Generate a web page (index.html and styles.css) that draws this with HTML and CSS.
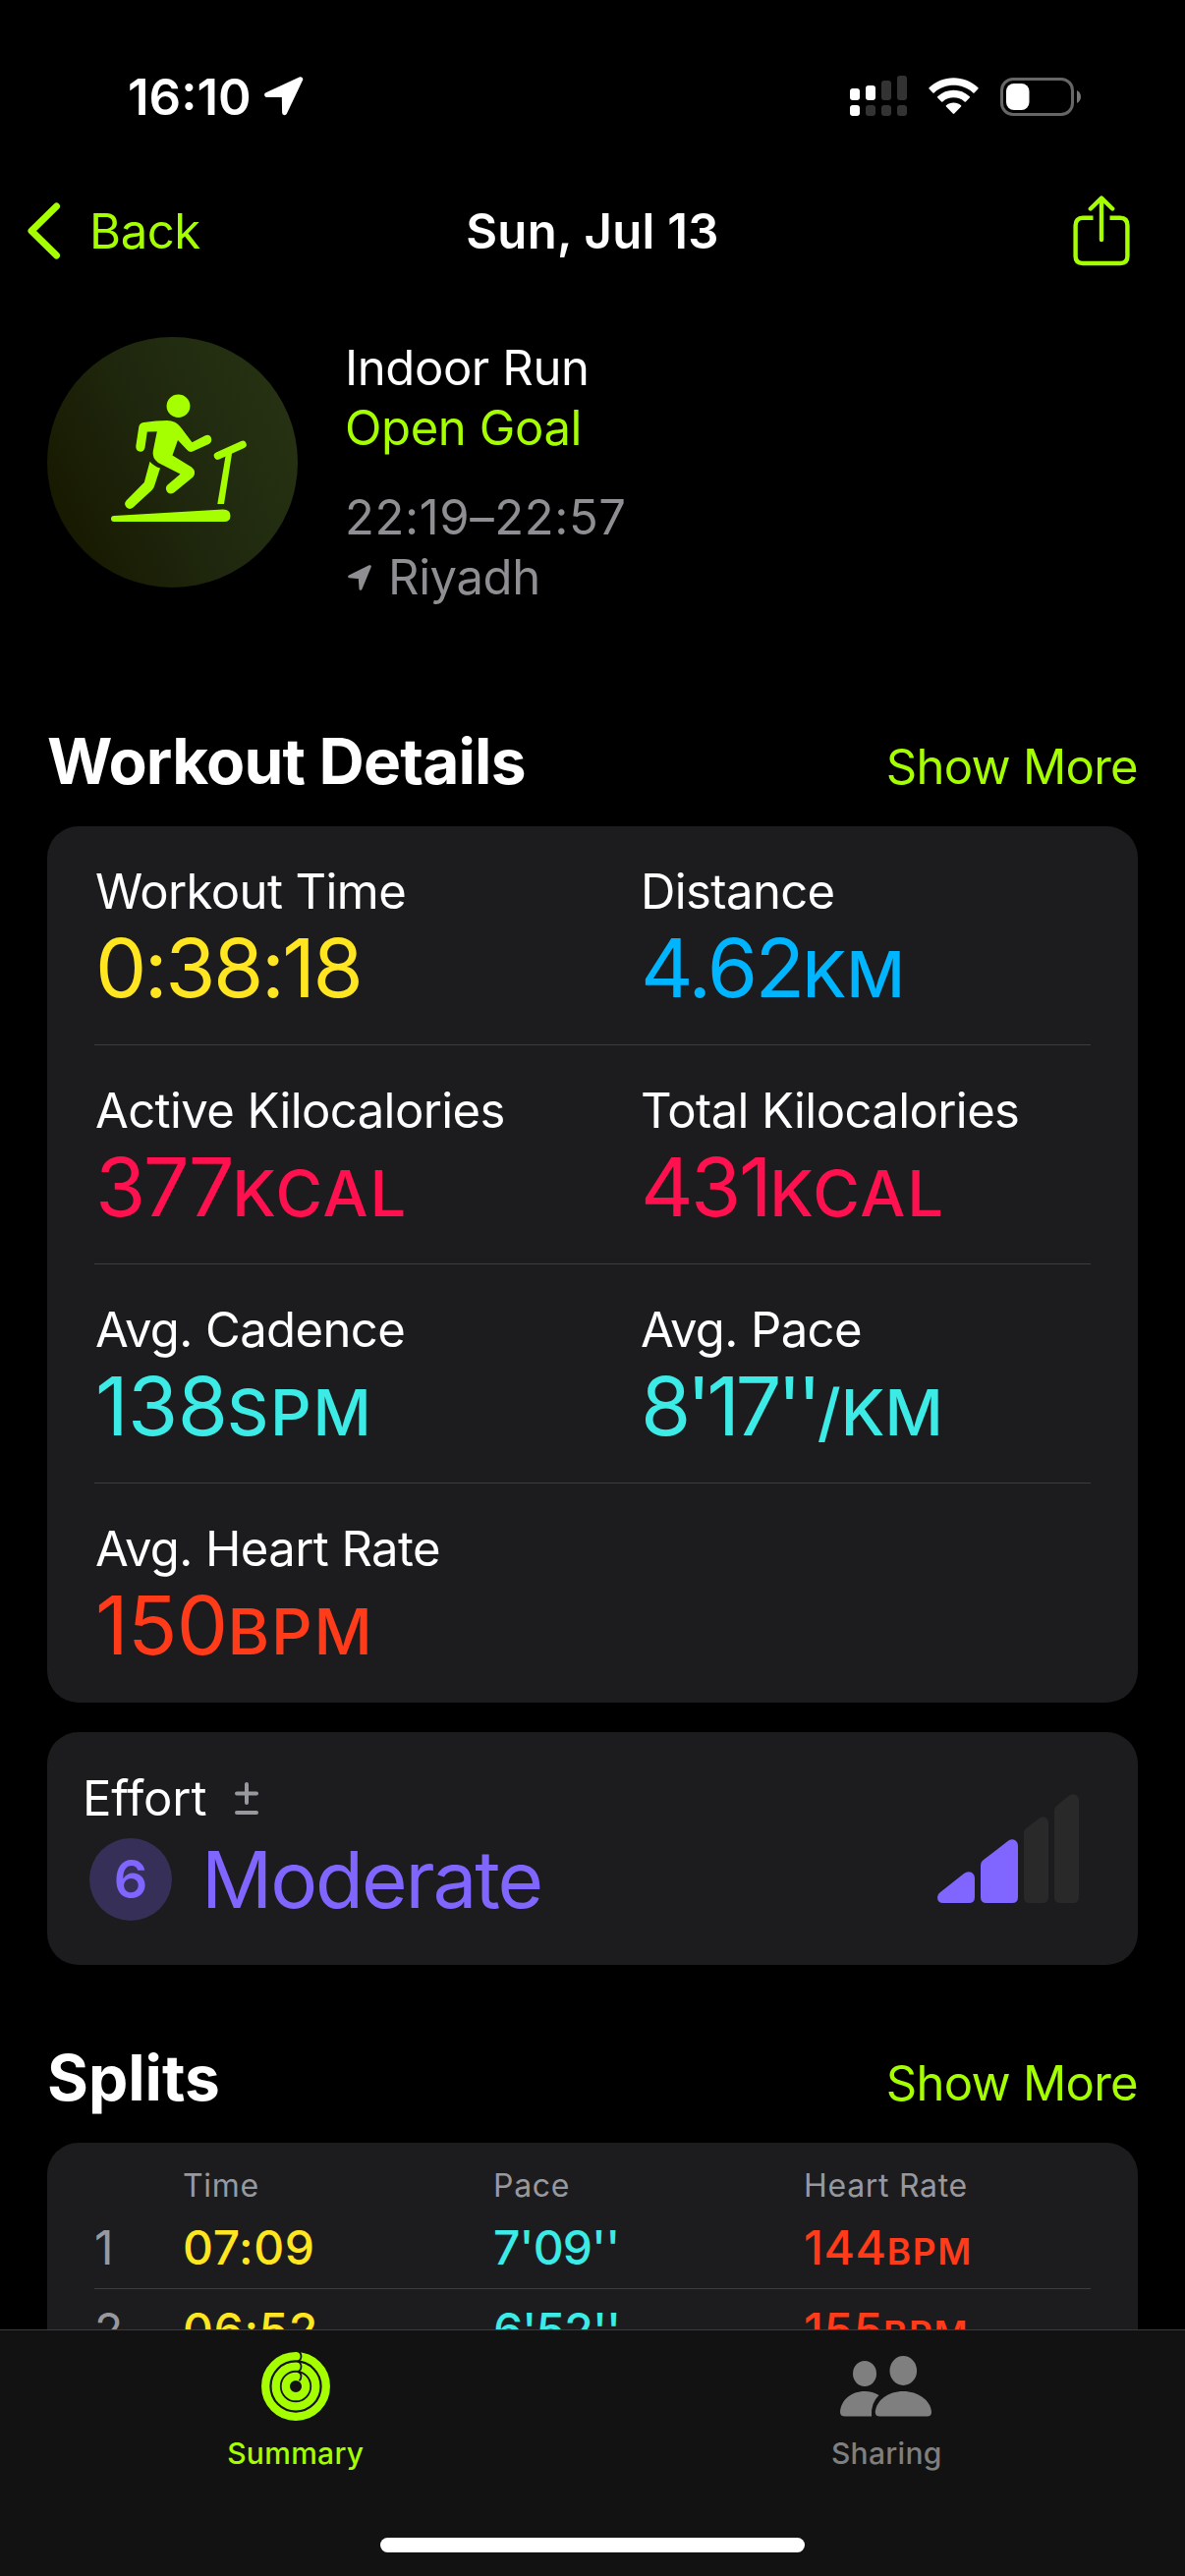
FILE: index.html
```html
<!DOCTYPE html>
<html lang="en">
<head>
    <meta charset="UTF-8">
    <meta name="viewport" content="width=device-width, initial-scale=1.0">
    <title>Workout Summary</title>
    <link rel="stylesheet" href="styles.css">
</head>
<body>

    <div class="screen">
        <!-- Status Bar -->
        <div class="status-bar">
            <div class="status-left">
                <span class="clock">16:10</span>
                <svg class="location" width="40" height="40" viewBox="0 0 40 40">
                    <path d="M36.7 2.7L2.7 18.6H20.3L20.6 36.8Z" fill="#fff" stroke="#fff" stroke-width="5" stroke-linejoin="round"/>
                </svg>
            </div>
            <div class="status-right">
                <svg class="signal" width="58" height="42" viewBox="0 0 58 42">
                    <g fill="#fff">
                        <rect x="0" y="13" width="10" height="12" rx="3"/>
                        <rect x="16" y="10" width="10" height="15" rx="3"/>
                        <rect x="0" y="30" width="10" height="11" rx="3"/>
                    </g>
                    <g fill="#333">
                        <rect x="32" y="5" width="10" height="20" rx="3"/>
                        <rect x="48" y="0" width="10" height="25" rx="3"/>
                        <rect x="16" y="30" width="10" height="11" rx="3"/>
                        <rect x="32" y="30" width="10" height="11" rx="3"/>
                        <rect x="48" y="30" width="10" height="11" rx="3"/>
                    </g>
                </svg>
                <svg class="wifi" width="51" height="38" viewBox="0 0 51 38">
                    <path d="M0.5 10.3C14 -3.2 37 -3.2 50.5 10.3Q51 10.9 50.4 11.5L46.6 15.4Q46 16 45.3 15.4C34 5.2 17 5.2 5.7 15.4Q5 16 4.4 15.4L0.6 11.5Q0 10.9 0.5 10.3Z" fill="#fff"/>
                    <path d="M9.2 19.3C18.3 10.7 32.7 10.7 41.8 19.3Q42.4 19.9 41.8 20.5L37.9 24.4Q37.3 25 36.6 24.4C30.5 19 20.5 19 14.4 24.4Q13.7 25 13.1 24.4L9.2 20.5Q8.6 19.9 9.2 19.3Z" fill="#fff"/>
                    <path d="M18 28.2C22.2 24.6 28.8 24.6 33 28.2Q33.7 28.8 33.1 29.5L26.3 36.6Q25.5 37.4 24.7 36.6L17.9 29.5Q17.3 28.8 18 28.2Z" fill="#fff"/>
                </svg>
                <svg class="battery" width="83" height="39" viewBox="0 0 83 39">
                    <rect x="1.5" y="1.5" width="72" height="36" rx="11.5" fill="none" stroke="#666" stroke-width="3"/>
                    <rect x="6" y="6" width="23.5" height="27" rx="8" fill="#fff"/>
                    <path d="M78 13C83.3 15.5 83.3 23.5 78 26Z" fill="#777"/>
                </svg>
            </div>
        </div>

        <!-- Navigation Bar -->
        <div class="nav-bar">
            <a class="back">
                <svg width="34" height="58" viewBox="0 0 34 58">
                    <path d="M29.5 4L4 29L29.5 54" fill="none" stroke="#a6ff00" stroke-width="7" stroke-linecap="round" stroke-linejoin="round"/>
                </svg>
                <span>Back</span>
            </a>
            <h1 class="nav-title">Sun, Jul 13</h1>
            <svg class="share" width="58" height="72" viewBox="0 0 58 72">
                <g fill="none" stroke="#a6ff00" stroke-width="4.4" stroke-linecap="round" stroke-linejoin="round">
                    <path d="M20.5 22.7H10Q2.6 22.7 2.6 30.5V62Q2.6 69 10 69H48Q55.4 69 55.4 62V30.5Q55.4 22.7 48 22.7H37.5" stroke-linecap="butt"/>
                    <path d="M29 45V3M17.8 13.5L29 2.6L40.2 13.5"/>
                </g>
            </svg>
        </div>

        <div class="content">
            <!-- Workout Header -->
            <div class="workout-header">
                <div class="workout-icon">
                    <svg width="255" height="255" viewBox="0 0 255 255" fill="#a6ff00">
                        <ellipse cx="133.5" cy="70.3" rx="11.9" ry="11.7"/>
                        <path d="M98 87Q111 85 122 84.9Q131 85 136 92L147.5 107.2L161 100.2Q165.5 98.7 167 103Q168 107 164.5 109L148 116.5Q144.5 118 142 114.5L133 105L127.5 120.5L147 132.5Q152.5 137 148.5 142.5L129 158.5Q124.5 161 122 157.5Q119.5 153.5 122.5 150.5L135.5 139.5L113 128Q106.5 123 107.8 116L111.8 96.2L101.8 96.5L99.5 112.5Q98.5 117 94.5 116.7Q90 116 90.3 111L93.3 91.5Q94 87.5 98 87Z"/>
                        <path d="M104.5 126.7Q108.5 131.5 115 133.5L109.2 151.5Q108.5 154 106.5 156L87.5 173.5Q84 176.3 80.8 173.5Q77.5 170 80.5 166.5L98.8 148Z"/>
                        <path d="M173.5 121L199 109.5" stroke="#a6ff00" stroke-width="7.5" stroke-linecap="round"/>
                        <path d="M181.7 120L188.3 117L180 170H173.3Z"/>
                        <path d="M68 182L179 175.5Q186.5 175.5 186.5 182Q186.5 188 180 188H68Q65 188 65 185Q65 182.2 68 182Z"/>
                    </svg>
                </div>
                <div class="workout-info">
                    <div class="workout-type">Indoor Run</div>
                    <div class="workout-goal">Open Goal</div>
                    <div class="workout-hours">22:19–22:57</div>
                    <div class="workout-place">
                        <svg width="24" height="26" viewBox="0 0 24 26">
                            <path d="M22.3 1.7L1.7 11.8L12.2 12.7L13 24.3Z" fill="#8e8e93" stroke="#8e8e93" stroke-width="3" stroke-linejoin="round"/>
                        </svg>
                        <span>Riyadh</span>
                    </div>
                </div>
            </div>

            <!-- Workout Details Section -->
            <div class="section-title details-title">
                <h2>Workout Details</h2>
                <a>Show More</a>
            </div>
            <div class="card details">
                <div class="details-row">
                    <div class="metric">
                        <div class="label">Workout Time</div>
                        <div class="value yellow">0:38:18</div>
                    </div>
                    <div class="metric">
                        <div class="label">Distance</div>
                        <div class="value blue">4.62<span class="unit">KM</span></div>
                    </div>
                </div>
                <div class="details-row">
                    <div class="metric">
                        <div class="label">Active Kilocalories</div>
                        <div class="value pink">377<span class="unit wide">KCAL</span></div>
                    </div>
                    <div class="metric">
                        <div class="label">Total Kilocalories</div>
                        <div class="value pink">431<span class="unit wide">KCAL</span></div>
                    </div>
                </div>
                <div class="details-row">
                    <div class="metric">
                        <div class="label">Avg. Cadence</div>
                        <div class="value rate cyan">138<span class="unit wide">SPM</span></div>
                    </div>
                    <div class="metric">
                        <div class="label">Avg. Pace</div>
                        <div class="value pace cyan">8'17''<span class="unit">/KM</span></div>
                    </div>
                </div>
                <div class="details-row">
                    <div class="metric">
                        <div class="label">Avg. Heart Rate</div>
                        <div class="value rate red">150<span class="unit wide">BPM</span></div>
                    </div>
                </div>
            </div>

            <!-- Effort -->
            <div class="card effort">
                <div class="effort-info">
                    <div class="effort-label">
                        <span>Effort</span>
                        <svg width="24" height="34" viewBox="0 0 24 34">
                            <path d="M2 11.5H22M12 2V21M2 31H22" stroke="#98989f" stroke-width="4" stroke-linecap="round"/>
                        </svg>
                    </div>
                    <div class="effort-value">
                        <span class="effort-score">6</span>
                        <span class="effort-name">Moderate</span>
                    </div>
                </div>
                <svg width="144" height="111" viewBox="0 0 144 111">
                    <path d="M3 100L27 81Q31 78 35 80Q38 82 38 86V105Q38 111 32 111H6Q0 111 0 105Q0 102 3 100Z" fill="#8165ff"/>
                    <path d="M47 67L71 48.5Q75 45 79 47Q82 49 82 53V105Q82 111 76 111H50Q44 111 44 105V73Q44 69 47 67Z" fill="#8165ff"/>
                    <path d="M91 34.5L102 26Q106 22 110 24Q113 26 113 30V105Q113 111 107 111H94Q88 111 88 105V40Q88 36.5 91 34.5Z" fill="#29292a"/>
                    <path d="M122 11.5L133 2.5Q137 -1 141 1Q144 3 144 7V105Q144 111 138 111H125Q119 111 119 105V17Q119 13.5 122 11.5Z" fill="#29292a"/>
                </svg>
            </div>

            <!-- Splits Section -->
            <div class="section-title splits-title">
                <h2>Splits</h2>
                <a>Show More</a>
            </div>
            <div class="card splits">
                <div class="splits-head">
                    <span></span>
                    <span>Time</span>
                    <span>Pace</span>
                    <span>Heart Rate</span>
                </div>
                <div class="splits-row">
                    <span class="index">1</span>
                    <span class="yellow">07:09</span>
                    <span class="pace cyan">7'09''</span>
                    <span class="red">144<span class="unit">BPM</span></span>
                </div>
                <div class="splits-row">
                    <span class="index">2</span>
                    <span class="yellow">06:52</span>
                    <span class="pace cyan">6'52''</span>
                    <span class="red">155<span class="unit">BPM</span></span>
                </div>
            </div>
        </div>

        <!-- Tab Bar -->
        <div class="tab-bar">
            <div class="tabs">
                <a class="tab active">
                    <svg width="70" height="70" viewBox="0 0 70 70">
                        <g fill="none" stroke="#a6ff00" stroke-width="8.3">
                            <circle cx="35" cy="35" r="30.8"/>
                            <circle cx="35" cy="35" r="20.3"/>
                            <circle cx="35" cy="35" r="10.2"/>
                        </g>
                        <!-- leading end of each ring -->
                        <g fill="none" stroke="#121212" stroke-width="1.8">
                            <path d="M37 -1Q40.5 0.5 40.5 4.3Q40.5 8.2 37 9.5"/>
                            <path d="M37 9.5Q40.5 11 40.5 14.8Q40.5 18.6 37 20"/>
                            <path d="M37 20Q40.5 21.3 40.5 24.5Q40.5 27.5 38.5 29.2"/>
                        </g>
                    </svg>
                    <span>Summary</span>
                </a>
                <a class="tab">
                    <svg width="94" height="70" viewBox="0 0 94 70" fill="#7f7f7f">
                        <ellipse cx="25" cy="22" rx="12" ry="13"/>
                        <ellipse cx="64.3" cy="19" rx="13.8" ry="15"/>
                        <path d="M25 40Q33 40 39.5 44Q31 52 32 65.5H5Q0 65.5 0 61C1 49 11 40 25 40Z"/>
                        <path d="M64.3 40C79 40 92 49 93 61Q93 65.5 88.5 65.5H40.5Q35.700 65.5 35.700 61C37 49 49 40 64.3 40Z"/>
                    </svg>
                    <span>Sharing</span>
                </a>
            </div>
            <div class="home-indicator"></div>
        </div>
    </div>

</body>
</html>
```

FILE: styles.css
```css
/* Basic styling for the entire page */
body {
    font-family: Inter, "Liberation Sans", sans-serif;
    font-size: 49px;
    margin: 0;
    background-color: #000;
    color: #fff;
}

* {
    box-sizing: border-box;
}

svg {
    display: block;
    flex-shrink: 0;
}

h1, h2 {
    margin: 0;
}

/* Full phone screen */
.screen {
    width: 1206px;
    height: 2622px;
    display: flex;
    flex-direction: column;
    overflow: hidden;
    white-space: nowrap;
}

/* Status bar */
.status-bar {
    height: 196px;
    flex-shrink: 0;
    display: flex;
    align-items: center;
    justify-content: space-between;
    padding: 0 105px 0 130px;
}

.status-left {
    display: flex;
    align-items: center;
    gap: 13px;
}

.clock {
    font-size: 51px;
    font-weight: 600;
}

.status-right {
    display: flex;
    align-items: center;
    gap: 22px;
}

/* Navigation bar */
.nav-bar {
    height: 77px;
    flex-shrink: 0;
    display: grid;
    grid-template-columns: 1fr auto 1fr;
    align-items: center;
    padding: 2px 28px 0;
}

.nav-bar svg {
    margin-top: -2px;
}

.back {
    display: flex;
    align-items: center;
    gap: 29px;
    color: #a6ff00;
    letter-spacing: -0.4px;
}

.nav-title {
    font-size: 49px;
    font-weight: 600;
    letter-spacing: 0.3px;
}

.share {
    justify-self: end;
    margin-right: 28px;
}

/* Scrolling content, cut off by the tab bar */
.content {
    flex: 1;
    min-height: 0;
    overflow: hidden;
    padding: 70px 48px 0;
}

.workout-header {
    display: flex;
    gap: 48px;
    height: 275px;
    line-height: 61px;
}

.workout-icon {
    width: 255px;
    height: 255px;
    border-radius: 50%;
    background: linear-gradient(65deg, #171900 10%, #1f280e 50%, #273313 95%);
}

.workout-info {
    padding-top: 1px;
    letter-spacing: -0.4px;
}

.workout-goal {
    color: #a6ff00;
}

.workout-hours {
    margin-top: 30px;
    letter-spacing: 0.6px;
}

.workout-hours, .workout-place {
    color: #8e8e93;
}

.workout-place {
    display: flex;
    align-items: center;
    gap: 17px;
    padding-left: 3px;
}

/* Section titles */
.section-title {
    display: flex;
    align-items: baseline;
    justify-content: space-between;
    height: 76px;
    line-height: 76px;
    margin-bottom: 28px;
}

.section-title h2 {
    font-size: 64px;
    font-weight: 700;
}

.section-title a {
    color: #a6ff00;
    letter-spacing: -0.7px;
}

.details-title {
    margin-top: 119px;
}

.details-title h2 {
    letter-spacing: -0.8px;
}

.splits-title {
    margin-top: 77px;
}

/* Cards */
.card {
    background-color: #1c1c1e;
    border-radius: 32px;
}

/* Workout details */
.details {
    padding: 0 48px;
}

.details-row {
    display: grid;
    grid-template-columns: 555px 1fr;
    height: 223px;
    padding: 37px 0 29px 1px;
    border-bottom: 1px solid #3d3d40;
}

.details-row:last-child {
    border-bottom: none;
}

.label {
    line-height: 60px;
    letter-spacing: -0.6px;
}

.value {
    margin-top: -1px;
    font-size: 83px;
    line-height: 96px;
    letter-spacing: -2.5px;
}

.value.rate {
    letter-spacing: -0.7px;
}

.value.pace {
    letter-spacing: -4.5px;
}

.value .unit {
    font-size: 65px;
    font-weight: 500;
    letter-spacing: 0;
}

.value .unit.wide {
    letter-spacing: 1.8px;
}

.yellow {
    color: #ffe620;
}

.blue {
    color: #00b5ff;
}

.pink {
    color: #ff114f;
}

.cyan {
    color: #3ceae6;
}

.red {
    color: #ff3b1a;
}

/* Effort */
.effort {
    display: flex;
    justify-content: space-between;
    align-items: center;
    height: 237px;
    margin-top: 30px;
    padding: 0 60px 0 36px;
}

.effort-info {
    padding-bottom: 7px;
}

.effort-label {
    display: flex;
    align-items: center;
    gap: 29px;
    line-height: 60px;
    letter-spacing: -0.1px;
}

.effort-value {
    display: flex;
    align-items: center;
    gap: 30px;
    margin-top: 10px;
    padding-left: 7px;
    color: #8165ff;
}

.effort-score {
    width: 84px;
    height: 84px;
    border-radius: 50%;
    background-color: #362f57;
    font-size: 54px;
    font-weight: 600;
    line-height: 84px;
    text-align: center;
}

.effort-name {
    font-size: 80px;
    line-height: 84px;
    letter-spacing: -2.1px;
}

/* Splits table */
.splits {
    padding: 22px 48px 0;
}

.splits-head, .splits-row {
    display: grid;
    grid-template-columns: 90px 316px 316px 1fr;
}

.splits-head {
    height: 43px;
    line-height: 43px;
    font-size: 32px;
    letter-spacing: 0.7px;
    color: #98989f;
}

.splits-row {
    height: 84px;
    line-height: 83px;
    font-size: 48px;
    font-weight: 450;
    letter-spacing: 0.6px;
    border-bottom: 1px solid #3d3d40;
}

.splits-row .pace {
    letter-spacing: -0.9px;
}

.splits-row .unit {
    font-size: 37px;
    font-weight: 600;
    letter-spacing: 1.6px;
}

.splits-row .index {
    font-weight: 400;
    color: #98989f;
}

/* Tab bar */
.tab-bar {
    height: 251px;
    flex-shrink: 0;
    display: flex;
    flex-direction: column;
    justify-content: space-between;
    padding: 22px 0 24px;
    background-color: #121212;
    border-top: 1px solid #3a3a3c;
}

.tabs {
    display: flex;
    padding-right: 3px;
}

.tab {
    flex: 1;
    display: flex;
    flex-direction: column;
    align-items: center;
    gap: 15px;
    color: #7f7f7f;
    font-size: 30px;
    font-weight: 500;
    line-height: 36px;
    letter-spacing: 0.3px;
}

.tab.active {
    color: #a6ff00;
}

.home-indicator {
    width: 432px;
    height: 15px;
    margin: 0 auto;
    border-radius: 8px;
    background-color: #fff;
}
```
